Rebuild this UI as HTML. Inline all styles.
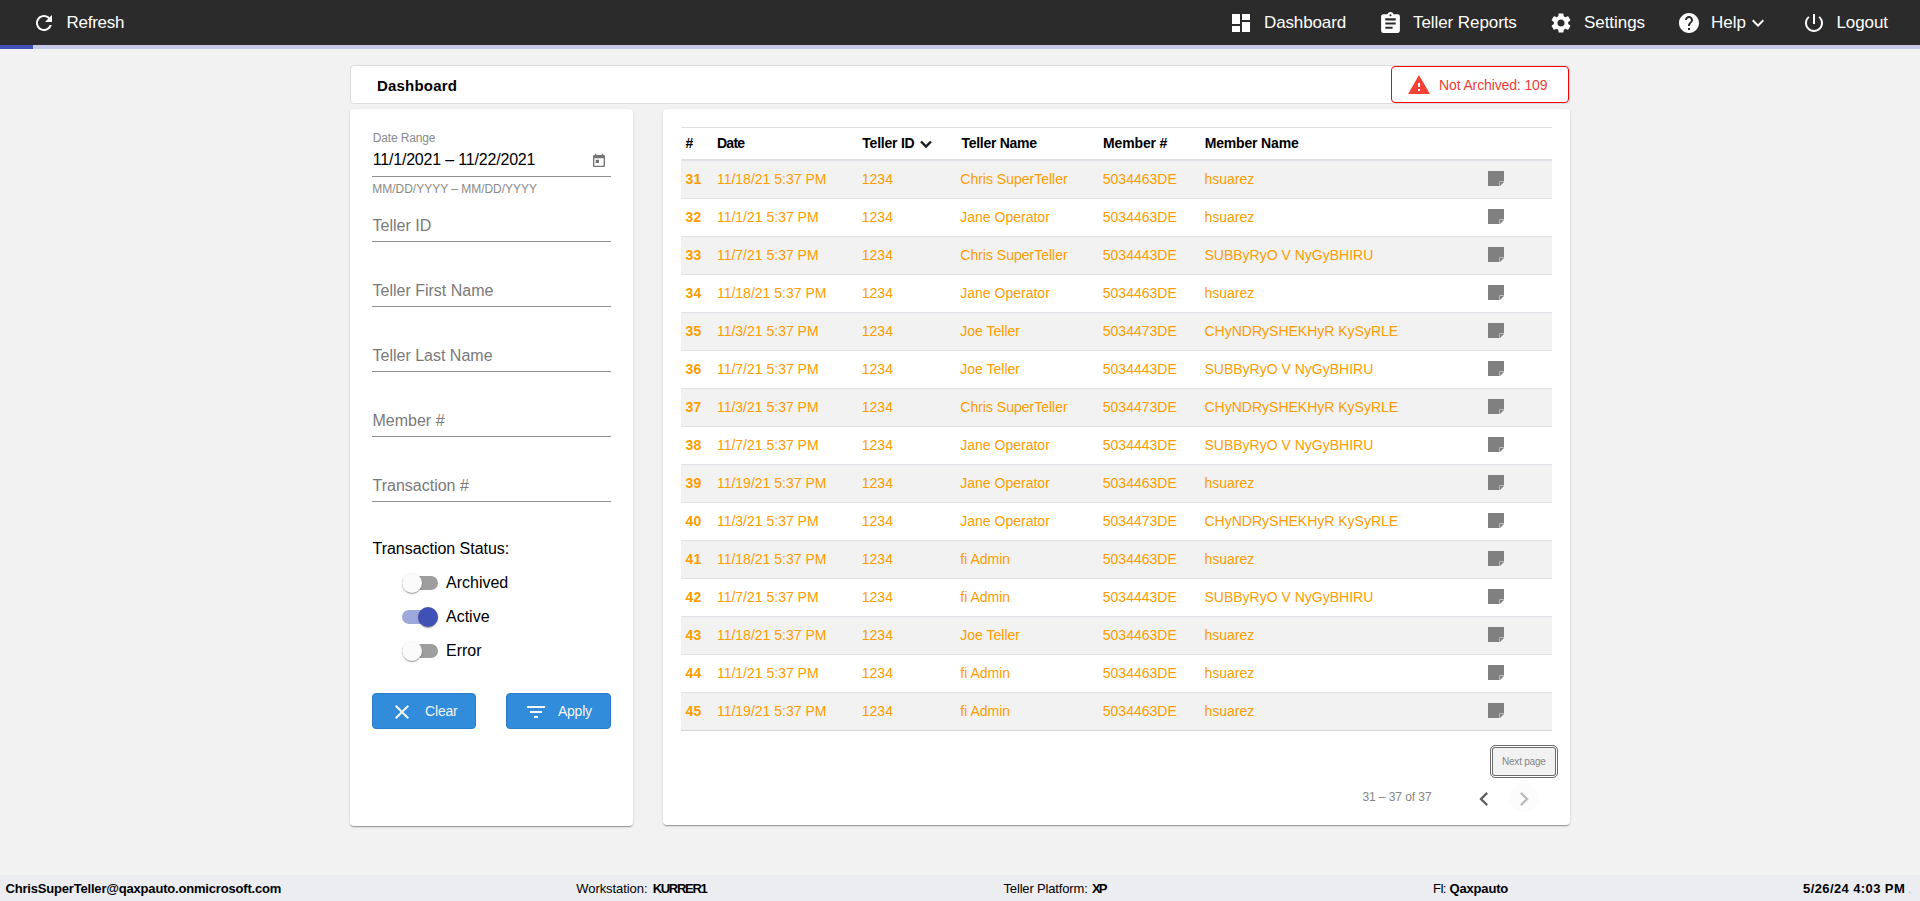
<!DOCTYPE html>
<html><head><meta charset="utf-8"><title>Dashboard</title>
<style>
html,body{margin:0;padding:0;}
body{width:1920px;height:901px;overflow:hidden;position:relative;background:#f2f2f2;font-family:"Liberation Sans",sans-serif;}
.t{position:absolute;white-space:nowrap;line-height:1;}
.ic{position:absolute;display:block;}
.abs{position:absolute;}
</style></head><body>
<div class="abs" style="left:0;top:0;width:1920px;height:45px;background:#2b2b2b"></div>
<div class="abs" style="left:0;top:45px;width:1920px;height:4px;background:#c5cae9"></div>
<div class="abs" style="left:0;top:45px;width:33px;height:4px;background:#3f51b5"></div>
<svg class="ic" style="left:31.5px;top:11px;width:24px;height:24px" viewBox="0 0 24 24" fill="#fff"><path d="M17.65 6.35C16.2 4.9 14.21 4 12 4c-4.42 0-7.99 3.58-7.99 8s3.57 8 7.99 8c3.73 0 6.84-2.55 7.73-6h-2.08c-.82 2.33-3.04 4-5.65 4-3.31 0-6-2.69-6-6s2.69-6 6-6c1.66 0 3.14.69 4.22 1.78L13 11h7V4l-2.35 2.35z"/></svg>
<div class="t" style="left:66.50px;top:14px;font-size:17px;color:#fff;font-weight:400;letter-spacing:-0.250px;">Refresh</div>
<svg class="ic" style="left:1229px;top:11px;width:24px;height:24px" viewBox="0 0 24 24" fill="#fff"><path d="M3 13h8V3H3v10zm0 8h8v-6H3v6zm10 0h8V11h-8v10zm0-18v6h8V3h-8z"/></svg>
<div class="t" style="left:1264.00px;top:14px;font-size:17px;color:#fff;font-weight:400;letter-spacing:-0.125px;">Dashboard</div>
<svg class="ic" style="left:1378.3px;top:11px;width:25px;height:25px" viewBox="0 0 24 24" fill="#fff"><path d="M19 3h-4.18C14.4 1.84 13.3 1 12 1c-1.3 0-2.4.84-2.82 2H5c-1.1 0-2 .9-2 2v14c0 1.1.9 2 2 2h14c1.1 0 2-.9 2-2V5c0-1.1-.9-2-2-2zm-7 0c.55 0 1 .45 1 1s-.45 1-1 1-1-.45-1-1 .45-1 1-1zm2 14H7v-2h7v2zm3-4H7v-2h10v2zm0-4H7V7h10v2z"/></svg>
<div class="t" style="left:1413.00px;top:14px;font-size:17px;color:#fff;font-weight:400;letter-spacing:-0.077px;">Teller Reports</div>
<svg class="ic" style="left:1549px;top:11px;width:24px;height:24px" viewBox="0 0 24 24" fill="#fff"><path d="M19.14 12.94c.04-.3.06-.61.06-.94 0-.32-.02-.64-.07-.94l2.03-1.58c.18-.14.23-.41.12-.61l-1.92-3.32c-.12-.22-.37-.29-.59-.22l-2.39.96c-.5-.38-1.03-.7-1.62-.94l-.36-2.54c-.04-.24-.24-.41-.48-.41h-3.84c-.24 0-.43.17-.47.41l-.36 2.54c-.59.24-1.13.57-1.62.94l-2.39-.96c-.22-.08-.47 0-.59.22L2.74 8.87c-.12.21-.08.47.12.61l2.03 1.58c-.05.3-.09.63-.09.94s.02.64.07.94l-2.03 1.58c-.18.14-.23.41-.12.61l1.92 3.32c.12.22.37.29.59.22l2.39-.96c.5.38 1.03.7 1.62.94l.36 2.54c.05.24.24.41.48.41h3.84c.24 0 .44-.17.47-.41l.36-2.54c.59-.24 1.13-.56 1.62-.94l2.39.96c.22.08.47 0 .59-.22l1.92-3.32c.12-.22.07-.47-.12-.61l-2.01-1.58zM12 15.6c-1.98 0-3.6-1.62-3.6-3.6s1.62-3.6 3.6-3.6 3.6 1.62 3.6 3.6-1.62 3.6-3.6 3.6z"/></svg>
<div class="t" style="left:1584.00px;top:14px;font-size:17px;color:#fff;font-weight:400;letter-spacing:-0.057px;">Settings</div>
<svg class="ic" style="left:1677px;top:11px;width:24px;height:24px" viewBox="0 0 24 24" fill="#fff"><path d="M12 2C6.48 2 2 6.48 2 12s4.48 10 10 10 10-4.48 10-10S17.52 2 12 2zm1 17h-2v-2h2v2zm2.07-7.75l-.9.92C13.45 12.9 13 13.5 13 15h-2v-.5c0-1.1.45-2.1 1.17-2.83l1.24-1.26c.37-.36.59-.86.59-1.41 0-1.1-.9-2-2-2s-2 .9-2 2H8c0-2.21 1.79-4 4-4s4 1.79 4 4c0 .88-.36 1.68-.93 2.25z"/></svg>
<div class="t" style="left:1711.00px;top:14px;font-size:17px;color:#fff;font-weight:400;">Help</div>
<svg class="ic" style="left:1745.8px;top:11px;width:24px;height:24px" viewBox="0 0 24 24" fill="#fff"><path d="M16.59 8.59L12 13.17 7.41 8.59 6 10l6 6 6-6z"/></svg>
<svg class="ic" style="left:1802px;top:11px;width:24px;height:24px" viewBox="0 0 24 24" fill="#fff"><path d="M13 3h-2v10h2V3zm4.83 2.17l-1.42 1.42C17.99 7.86 19 9.81 19 12c0 3.87-3.13 7-7 7s-7-3.13-7-7c0-2.19 1.01-4.14 2.58-5.42L6.17 5.17C4.23 6.82 3 9.26 3 12c0 4.97 4.03 9 9 9s9-4.03 9-9c0-2.74-1.23-5.18-3.17-6.83z"/></svg>
<div class="t" style="left:1836.40px;top:14px;font-size:17px;color:#fff;font-weight:400;letter-spacing:-0.080px;">Logout</div>
<div class="abs" style="left:350px;top:65px;width:1218px;height:37px;background:#fff;border:1px solid #dcdcdc;border-radius:4px"></div>
<div class="t" style="left:377.00px;top:78px;font-size:15px;color:#000;font-weight:700;letter-spacing:0.188px;">Dashboard</div>
<div class="abs" style="left:1391px;top:66px;width:176px;height:35px;background:#fff;border:1px solid #ff0000;border-radius:4px"></div>
<svg class="ic" style="left:1406.6px;top:73px;width:24px;height:24px" viewBox="0 0 24 24" fill="#f44336"><path d="M1 21h22L12 2 1 21zm12-3h-2v-2h2v2zm0-4h-2v-4h2v4z"/></svg>
<div class="t" style="left:1439.00px;top:78px;font-size:14px;color:#ee3d38;font-weight:400;letter-spacing:-0.125px;">Not Archived: 109</div>
<div class="abs" style="left:350px;top:109px;width:283px;height:717px;background:#fff;border-radius:4px;box-shadow:0 2px 1px -1px rgba(0,0,0,.2),0 1px 1px 0 rgba(0,0,0,.14),0 1px 3px 0 rgba(0,0,0,.12);"></div>
<div class="t" style="left:372.70px;top:132px;font-size:12px;color:#8a8a8a;font-weight:400;letter-spacing:-0.133px;">Date Range</div>
<div class="t" style="left:372.70px;top:152px;font-size:16px;color:#000;font-weight:400;letter-spacing:-0.186px;">11/1/2021 – 11/22/2021</div>
<svg class="ic" style="left:590.9px;top:152.8px;width:16px;height:16px" viewBox="0 0 24 24" fill="#757575"><path d="M19 3h-1V1h-2v2H8V1H6v2H5c-1.11 0-1.99.9-1.99 2L3 19c0 1.1.89 2 2 2h14c1.1 0 2-.9 2-2V5c0-1.1-.9-2-2-2zm0 16H5V8h14v11zM7 10h5v5H7z"/></svg>
<div class="abs" style="left:372px;top:176px;width:239px;height:1px;background:#8f8f8f"></div>
<div class="t" style="left:372.30px;top:183px;font-size:12px;color:#8a8a8a;font-weight:400;letter-spacing:-0.018px;">MM/DD/YYYY – MM/DD/YYYY</div>
<div class="t" style="left:372.50px;top:218px;font-size:16px;color:#7a7a7a;font-weight:400;">Teller ID</div>
<div class="abs" style="left:372px;top:241px;width:239px;height:1px;background:#8f8f8f"></div>
<div class="t" style="left:372.50px;top:283px;font-size:16px;color:#7a7a7a;font-weight:400;">Teller First Name</div>
<div class="abs" style="left:372px;top:306px;width:239px;height:1px;background:#8f8f8f"></div>
<div class="t" style="left:372.50px;top:348px;font-size:16px;color:#7a7a7a;font-weight:400;">Teller Last Name</div>
<div class="abs" style="left:372px;top:371px;width:239px;height:1px;background:#8f8f8f"></div>
<div class="t" style="left:372.50px;top:413px;font-size:16px;color:#7a7a7a;font-weight:400;">Member #</div>
<div class="abs" style="left:372px;top:436px;width:239px;height:1px;background:#8f8f8f"></div>
<div class="t" style="left:372.50px;top:478px;font-size:16px;color:#7a7a7a;font-weight:400;">Transaction #</div>
<div class="abs" style="left:372px;top:501px;width:239px;height:1px;background:#8f8f8f"></div>
<div class="t" style="left:372.50px;top:541px;font-size:16px;color:#000;font-weight:400;letter-spacing:-0.028px;">Transaction Status:</div>
<div class="abs" style="left:402px;top:575.5px;width:36px;height:14px;border-radius:7px;background:#9e9e9e"></div>
<div class="abs" style="left:402px;top:572.5px;width:20px;height:20px;border-radius:10px;background:#fafafa;box-shadow:0 2px 1px -1px rgba(0,0,0,.2),0 1px 1px 0 rgba(0,0,0,.14),0 1px 3px 0 rgba(0,0,0,.12)"></div>
<div class="t" style="left:446.00px;top:575px;font-size:16px;color:#000;font-weight:400;">Archived</div>
<div class="abs" style="left:402px;top:609.6px;width:36px;height:14px;border-radius:7px;background:#9fa8da"></div>
<div class="abs" style="left:418px;top:606.6px;width:20px;height:20px;border-radius:10px;background:#3f51b5;box-shadow:0 2px 1px -1px rgba(0,0,0,.2),0 1px 1px 0 rgba(0,0,0,.14),0 1px 3px 0 rgba(0,0,0,.12)"></div>
<div class="t" style="left:446.00px;top:609px;font-size:16px;color:#000;font-weight:400;">Active</div>
<div class="abs" style="left:402px;top:643.8px;width:36px;height:14px;border-radius:7px;background:#9e9e9e"></div>
<div class="abs" style="left:402px;top:640.8px;width:20px;height:20px;border-radius:10px;background:#fafafa;box-shadow:0 2px 1px -1px rgba(0,0,0,.2),0 1px 1px 0 rgba(0,0,0,.14),0 1px 3px 0 rgba(0,0,0,.12)"></div>
<div class="t" style="left:446.00px;top:643px;font-size:16px;color:#000;font-weight:400;">Error</div>
<div class="abs" style="left:372px;top:693px;width:102px;height:34px;background:#318cdc;border:1px solid #2a7cc6;border-radius:4px"></div>
<svg class="ic" style="left:390.3px;top:700px;width:24px;height:24px" viewBox="0 0 24 24" fill="#f5f5f5"><path d="M19 6.41L17.59 5 12 10.59 6.41 5 5 6.41 10.59 12 5 17.59 6.41 19 12 13.41 17.59 19 19 17.59 13.41 12z"/></svg>
<div class="t" style="left:425.10px;top:704px;font-size:14px;color:#f5f5f5;font-weight:400;letter-spacing:-0.200px;">Clear</div>
<div class="abs" style="left:506px;top:693px;width:103px;height:34px;background:#318cdc;border:1px solid #2a7cc6;border-radius:4px"></div>
<svg class="ic" style="left:523.7px;top:700px;width:24px;height:24px" viewBox="0 0 24 24" fill="#f5f5f5"><path d="M10 18h4v-2h-4v2zM3 6v2h18V6H3zm3 7h12v-2H6v2z"/></svg>
<div class="t" style="left:558.00px;top:704px;font-size:14px;color:#f5f5f5;font-weight:400;letter-spacing:-0.250px;">Apply</div>
<div class="abs" style="left:663px;top:109px;width:907px;height:716px;background:#fff;border-radius:4px;box-shadow:0 2px 1px -1px rgba(0,0,0,.2),0 1px 1px 0 rgba(0,0,0,.14),0 1px 3px 0 rgba(0,0,0,.12);"></div>
<div class="abs" style="left:681px;top:127px;width:871px;height:1px;background:#dee2e6"></div>
<div class="t" style="left:685.60px;top:136px;font-size:14px;color:#000;font-weight:700;">#</div>
<div class="t" style="left:716.90px;top:136px;font-size:14px;color:#000;font-weight:700;letter-spacing:-0.700px;">Date</div>
<div class="t" style="left:862.30px;top:136px;font-size:14px;color:#000;font-weight:700;letter-spacing:-0.225px;">Teller ID</div>
<div class="t" style="left:961.50px;top:136px;font-size:14px;color:#000;font-weight:700;letter-spacing:-0.280px;">Teller Name</div>
<div class="t" style="left:1103.00px;top:136px;font-size:14px;color:#000;font-weight:700;letter-spacing:-0.143px;">Member #</div>
<div class="t" style="left:1204.70px;top:136px;font-size:14px;color:#000;font-weight:700;letter-spacing:-0.170px;">Member Name</div>
<svg class="ic" style="left:919px;top:138.5px;width:14px;height:11px" viewBox="0 0 14 11"><path d="M2 2.5 L7 7.5 L12 2.5" fill="none" stroke="#1a1a1a" stroke-width="2.4"/></svg>
<div class="abs" style="left:681px;top:159px;width:871px;height:2px;background:#dee2e6"></div>
<div class="abs" style="left:681px;top:161px;width:871px;height:37px;background:#f2f2f2"></div>
<div class="abs" style="left:681px;top:198px;width:871px;height:1px;background:#dee2e6"></div>
<div class="t" style="left:685.60px;top:172px;font-size:14px;color:#ff9c00;font-weight:700;">31</div>
<div class="t" style="left:716.90px;top:172px;font-size:14px;color:#ff9c00;font-weight:400;">11/18/21 5:37 PM</div>
<div class="t" style="left:861.80px;top:172px;font-size:14px;color:#ff9c00;font-weight:400;">1234</div>
<div class="t" style="left:960.30px;top:172px;font-size:14px;color:#ff9c00;font-weight:400;">Chris SuperTeller</div>
<div class="t" style="left:1102.80px;top:172px;font-size:14px;color:#ff9c00;font-weight:400;">5034463DE</div>
<div class="t" style="left:1204.50px;top:172px;font-size:14px;color:#ff9c00;font-weight:400;">hsuarez</div>
<svg class="ic" style="left:1488px;top:171px;width:16px;height:15px" viewBox="0 0 16 15"><path d="M0 0H16V10.5H11.5V15H0Z" fill="#808080"/><path d="M12 11H16L12 15Z" fill="#808080"/></svg>
<div class="abs" style="left:681px;top:236px;width:871px;height:1px;background:#dee2e6"></div>
<div class="t" style="left:685.60px;top:210px;font-size:14px;color:#ff9c00;font-weight:700;">32</div>
<div class="t" style="left:716.90px;top:210px;font-size:14px;color:#ff9c00;font-weight:400;">11/1/21 5:37 PM</div>
<div class="t" style="left:861.80px;top:210px;font-size:14px;color:#ff9c00;font-weight:400;">1234</div>
<div class="t" style="left:960.30px;top:210px;font-size:14px;color:#ff9c00;font-weight:400;">Jane Operator</div>
<div class="t" style="left:1102.80px;top:210px;font-size:14px;color:#ff9c00;font-weight:400;">5034463DE</div>
<div class="t" style="left:1204.50px;top:210px;font-size:14px;color:#ff9c00;font-weight:400;">hsuarez</div>
<svg class="ic" style="left:1488px;top:209px;width:16px;height:15px" viewBox="0 0 16 15"><path d="M0 0H16V10.5H11.5V15H0Z" fill="#808080"/><path d="M12 11H16L12 15Z" fill="#808080"/></svg>
<div class="abs" style="left:681px;top:237px;width:871px;height:37px;background:#f2f2f2"></div>
<div class="abs" style="left:681px;top:274px;width:871px;height:1px;background:#dee2e6"></div>
<div class="t" style="left:685.60px;top:248px;font-size:14px;color:#ff9c00;font-weight:700;">33</div>
<div class="t" style="left:716.90px;top:248px;font-size:14px;color:#ff9c00;font-weight:400;">11/7/21 5:37 PM</div>
<div class="t" style="left:861.80px;top:248px;font-size:14px;color:#ff9c00;font-weight:400;">1234</div>
<div class="t" style="left:960.30px;top:248px;font-size:14px;color:#ff9c00;font-weight:400;">Chris SuperTeller</div>
<div class="t" style="left:1102.80px;top:248px;font-size:14px;color:#ff9c00;font-weight:400;">5034443DE</div>
<div class="t" style="left:1204.50px;top:248px;font-size:14px;color:#ff9c00;font-weight:400;">SUBByRyO V NyGyBHIRU</div>
<svg class="ic" style="left:1488px;top:247px;width:16px;height:15px" viewBox="0 0 16 15"><path d="M0 0H16V10.5H11.5V15H0Z" fill="#808080"/><path d="M12 11H16L12 15Z" fill="#808080"/></svg>
<div class="abs" style="left:681px;top:312px;width:871px;height:1px;background:#dee2e6"></div>
<div class="t" style="left:685.60px;top:286px;font-size:14px;color:#ff9c00;font-weight:700;">34</div>
<div class="t" style="left:716.90px;top:286px;font-size:14px;color:#ff9c00;font-weight:400;">11/18/21 5:37 PM</div>
<div class="t" style="left:861.80px;top:286px;font-size:14px;color:#ff9c00;font-weight:400;">1234</div>
<div class="t" style="left:960.30px;top:286px;font-size:14px;color:#ff9c00;font-weight:400;">Jane Operator</div>
<div class="t" style="left:1102.80px;top:286px;font-size:14px;color:#ff9c00;font-weight:400;">5034463DE</div>
<div class="t" style="left:1204.50px;top:286px;font-size:14px;color:#ff9c00;font-weight:400;">hsuarez</div>
<svg class="ic" style="left:1488px;top:285px;width:16px;height:15px" viewBox="0 0 16 15"><path d="M0 0H16V10.5H11.5V15H0Z" fill="#808080"/><path d="M12 11H16L12 15Z" fill="#808080"/></svg>
<div class="abs" style="left:681px;top:313px;width:871px;height:37px;background:#f2f2f2"></div>
<div class="abs" style="left:681px;top:350px;width:871px;height:1px;background:#dee2e6"></div>
<div class="t" style="left:685.60px;top:324px;font-size:14px;color:#ff9c00;font-weight:700;">35</div>
<div class="t" style="left:716.90px;top:324px;font-size:14px;color:#ff9c00;font-weight:400;">11/3/21 5:37 PM</div>
<div class="t" style="left:861.80px;top:324px;font-size:14px;color:#ff9c00;font-weight:400;">1234</div>
<div class="t" style="left:960.30px;top:324px;font-size:14px;color:#ff9c00;font-weight:400;">Joe Teller</div>
<div class="t" style="left:1102.80px;top:324px;font-size:14px;color:#ff9c00;font-weight:400;">5034473DE</div>
<div class="t" style="left:1204.50px;top:324px;font-size:14px;color:#ff9c00;font-weight:400;">CHyNDRySHEKHyR KySyRLE</div>
<svg class="ic" style="left:1488px;top:323px;width:16px;height:15px" viewBox="0 0 16 15"><path d="M0 0H16V10.5H11.5V15H0Z" fill="#808080"/><path d="M12 11H16L12 15Z" fill="#808080"/></svg>
<div class="abs" style="left:681px;top:388px;width:871px;height:1px;background:#dee2e6"></div>
<div class="t" style="left:685.60px;top:362px;font-size:14px;color:#ff9c00;font-weight:700;">36</div>
<div class="t" style="left:716.90px;top:362px;font-size:14px;color:#ff9c00;font-weight:400;">11/7/21 5:37 PM</div>
<div class="t" style="left:861.80px;top:362px;font-size:14px;color:#ff9c00;font-weight:400;">1234</div>
<div class="t" style="left:960.30px;top:362px;font-size:14px;color:#ff9c00;font-weight:400;">Joe Teller</div>
<div class="t" style="left:1102.80px;top:362px;font-size:14px;color:#ff9c00;font-weight:400;">5034443DE</div>
<div class="t" style="left:1204.50px;top:362px;font-size:14px;color:#ff9c00;font-weight:400;">SUBByRyO V NyGyBHIRU</div>
<svg class="ic" style="left:1488px;top:361px;width:16px;height:15px" viewBox="0 0 16 15"><path d="M0 0H16V10.5H11.5V15H0Z" fill="#808080"/><path d="M12 11H16L12 15Z" fill="#808080"/></svg>
<div class="abs" style="left:681px;top:389px;width:871px;height:37px;background:#f2f2f2"></div>
<div class="abs" style="left:681px;top:426px;width:871px;height:1px;background:#dee2e6"></div>
<div class="t" style="left:685.60px;top:400px;font-size:14px;color:#ff9c00;font-weight:700;">37</div>
<div class="t" style="left:716.90px;top:400px;font-size:14px;color:#ff9c00;font-weight:400;">11/3/21 5:37 PM</div>
<div class="t" style="left:861.80px;top:400px;font-size:14px;color:#ff9c00;font-weight:400;">1234</div>
<div class="t" style="left:960.30px;top:400px;font-size:14px;color:#ff9c00;font-weight:400;">Chris SuperTeller</div>
<div class="t" style="left:1102.80px;top:400px;font-size:14px;color:#ff9c00;font-weight:400;">5034473DE</div>
<div class="t" style="left:1204.50px;top:400px;font-size:14px;color:#ff9c00;font-weight:400;">CHyNDRySHEKHyR KySyRLE</div>
<svg class="ic" style="left:1488px;top:399px;width:16px;height:15px" viewBox="0 0 16 15"><path d="M0 0H16V10.5H11.5V15H0Z" fill="#808080"/><path d="M12 11H16L12 15Z" fill="#808080"/></svg>
<div class="abs" style="left:681px;top:464px;width:871px;height:1px;background:#dee2e6"></div>
<div class="t" style="left:685.60px;top:438px;font-size:14px;color:#ff9c00;font-weight:700;">38</div>
<div class="t" style="left:716.90px;top:438px;font-size:14px;color:#ff9c00;font-weight:400;">11/7/21 5:37 PM</div>
<div class="t" style="left:861.80px;top:438px;font-size:14px;color:#ff9c00;font-weight:400;">1234</div>
<div class="t" style="left:960.30px;top:438px;font-size:14px;color:#ff9c00;font-weight:400;">Jane Operator</div>
<div class="t" style="left:1102.80px;top:438px;font-size:14px;color:#ff9c00;font-weight:400;">5034443DE</div>
<div class="t" style="left:1204.50px;top:438px;font-size:14px;color:#ff9c00;font-weight:400;">SUBByRyO V NyGyBHIRU</div>
<svg class="ic" style="left:1488px;top:437px;width:16px;height:15px" viewBox="0 0 16 15"><path d="M0 0H16V10.5H11.5V15H0Z" fill="#808080"/><path d="M12 11H16L12 15Z" fill="#808080"/></svg>
<div class="abs" style="left:681px;top:465px;width:871px;height:37px;background:#f2f2f2"></div>
<div class="abs" style="left:681px;top:502px;width:871px;height:1px;background:#dee2e6"></div>
<div class="t" style="left:685.60px;top:476px;font-size:14px;color:#ff9c00;font-weight:700;">39</div>
<div class="t" style="left:716.90px;top:476px;font-size:14px;color:#ff9c00;font-weight:400;">11/19/21 5:37 PM</div>
<div class="t" style="left:861.80px;top:476px;font-size:14px;color:#ff9c00;font-weight:400;">1234</div>
<div class="t" style="left:960.30px;top:476px;font-size:14px;color:#ff9c00;font-weight:400;">Jane Operator</div>
<div class="t" style="left:1102.80px;top:476px;font-size:14px;color:#ff9c00;font-weight:400;">5034463DE</div>
<div class="t" style="left:1204.50px;top:476px;font-size:14px;color:#ff9c00;font-weight:400;">hsuarez</div>
<svg class="ic" style="left:1488px;top:475px;width:16px;height:15px" viewBox="0 0 16 15"><path d="M0 0H16V10.5H11.5V15H0Z" fill="#808080"/><path d="M12 11H16L12 15Z" fill="#808080"/></svg>
<div class="abs" style="left:681px;top:540px;width:871px;height:1px;background:#dee2e6"></div>
<div class="t" style="left:685.60px;top:514px;font-size:14px;color:#ff9c00;font-weight:700;">40</div>
<div class="t" style="left:716.90px;top:514px;font-size:14px;color:#ff9c00;font-weight:400;">11/3/21 5:37 PM</div>
<div class="t" style="left:861.80px;top:514px;font-size:14px;color:#ff9c00;font-weight:400;">1234</div>
<div class="t" style="left:960.30px;top:514px;font-size:14px;color:#ff9c00;font-weight:400;">Jane Operator</div>
<div class="t" style="left:1102.80px;top:514px;font-size:14px;color:#ff9c00;font-weight:400;">5034473DE</div>
<div class="t" style="left:1204.50px;top:514px;font-size:14px;color:#ff9c00;font-weight:400;">CHyNDRySHEKHyR KySyRLE</div>
<svg class="ic" style="left:1488px;top:513px;width:16px;height:15px" viewBox="0 0 16 15"><path d="M0 0H16V10.5H11.5V15H0Z" fill="#808080"/><path d="M12 11H16L12 15Z" fill="#808080"/></svg>
<div class="abs" style="left:681px;top:541px;width:871px;height:37px;background:#f2f2f2"></div>
<div class="abs" style="left:681px;top:578px;width:871px;height:1px;background:#dee2e6"></div>
<div class="t" style="left:685.60px;top:552px;font-size:14px;color:#ff9c00;font-weight:700;">41</div>
<div class="t" style="left:716.90px;top:552px;font-size:14px;color:#ff9c00;font-weight:400;">11/18/21 5:37 PM</div>
<div class="t" style="left:861.80px;top:552px;font-size:14px;color:#ff9c00;font-weight:400;">1234</div>
<div class="t" style="left:960.30px;top:552px;font-size:14px;color:#ff9c00;font-weight:400;">fi Admin</div>
<div class="t" style="left:1102.80px;top:552px;font-size:14px;color:#ff9c00;font-weight:400;">5034463DE</div>
<div class="t" style="left:1204.50px;top:552px;font-size:14px;color:#ff9c00;font-weight:400;">hsuarez</div>
<svg class="ic" style="left:1488px;top:551px;width:16px;height:15px" viewBox="0 0 16 15"><path d="M0 0H16V10.5H11.5V15H0Z" fill="#808080"/><path d="M12 11H16L12 15Z" fill="#808080"/></svg>
<div class="abs" style="left:681px;top:616px;width:871px;height:1px;background:#dee2e6"></div>
<div class="t" style="left:685.60px;top:590px;font-size:14px;color:#ff9c00;font-weight:700;">42</div>
<div class="t" style="left:716.90px;top:590px;font-size:14px;color:#ff9c00;font-weight:400;">11/7/21 5:37 PM</div>
<div class="t" style="left:861.80px;top:590px;font-size:14px;color:#ff9c00;font-weight:400;">1234</div>
<div class="t" style="left:960.30px;top:590px;font-size:14px;color:#ff9c00;font-weight:400;">fi Admin</div>
<div class="t" style="left:1102.80px;top:590px;font-size:14px;color:#ff9c00;font-weight:400;">5034443DE</div>
<div class="t" style="left:1204.50px;top:590px;font-size:14px;color:#ff9c00;font-weight:400;">SUBByRyO V NyGyBHIRU</div>
<svg class="ic" style="left:1488px;top:589px;width:16px;height:15px" viewBox="0 0 16 15"><path d="M0 0H16V10.5H11.5V15H0Z" fill="#808080"/><path d="M12 11H16L12 15Z" fill="#808080"/></svg>
<div class="abs" style="left:681px;top:617px;width:871px;height:37px;background:#f2f2f2"></div>
<div class="abs" style="left:681px;top:654px;width:871px;height:1px;background:#dee2e6"></div>
<div class="t" style="left:685.60px;top:628px;font-size:14px;color:#ff9c00;font-weight:700;">43</div>
<div class="t" style="left:716.90px;top:628px;font-size:14px;color:#ff9c00;font-weight:400;">11/18/21 5:37 PM</div>
<div class="t" style="left:861.80px;top:628px;font-size:14px;color:#ff9c00;font-weight:400;">1234</div>
<div class="t" style="left:960.30px;top:628px;font-size:14px;color:#ff9c00;font-weight:400;">Joe Teller</div>
<div class="t" style="left:1102.80px;top:628px;font-size:14px;color:#ff9c00;font-weight:400;">5034463DE</div>
<div class="t" style="left:1204.50px;top:628px;font-size:14px;color:#ff9c00;font-weight:400;">hsuarez</div>
<svg class="ic" style="left:1488px;top:627px;width:16px;height:15px" viewBox="0 0 16 15"><path d="M0 0H16V10.5H11.5V15H0Z" fill="#808080"/><path d="M12 11H16L12 15Z" fill="#808080"/></svg>
<div class="abs" style="left:681px;top:692px;width:871px;height:1px;background:#dee2e6"></div>
<div class="t" style="left:685.60px;top:666px;font-size:14px;color:#ff9c00;font-weight:700;">44</div>
<div class="t" style="left:716.90px;top:666px;font-size:14px;color:#ff9c00;font-weight:400;">11/1/21 5:37 PM</div>
<div class="t" style="left:861.80px;top:666px;font-size:14px;color:#ff9c00;font-weight:400;">1234</div>
<div class="t" style="left:960.30px;top:666px;font-size:14px;color:#ff9c00;font-weight:400;">fi Admin</div>
<div class="t" style="left:1102.80px;top:666px;font-size:14px;color:#ff9c00;font-weight:400;">5034463DE</div>
<div class="t" style="left:1204.50px;top:666px;font-size:14px;color:#ff9c00;font-weight:400;">hsuarez</div>
<svg class="ic" style="left:1488px;top:665px;width:16px;height:15px" viewBox="0 0 16 15"><path d="M0 0H16V10.5H11.5V15H0Z" fill="#808080"/><path d="M12 11H16L12 15Z" fill="#808080"/></svg>
<div class="abs" style="left:681px;top:693px;width:871px;height:37px;background:#f2f2f2"></div>
<div class="abs" style="left:681px;top:730px;width:871px;height:1px;background:#d2d2d2"></div>
<div class="t" style="left:685.60px;top:704px;font-size:14px;color:#ff9c00;font-weight:700;">45</div>
<div class="t" style="left:716.90px;top:704px;font-size:14px;color:#ff9c00;font-weight:400;">11/19/21 5:37 PM</div>
<div class="t" style="left:861.80px;top:704px;font-size:14px;color:#ff9c00;font-weight:400;">1234</div>
<div class="t" style="left:960.30px;top:704px;font-size:14px;color:#ff9c00;font-weight:400;">fi Admin</div>
<div class="t" style="left:1102.80px;top:704px;font-size:14px;color:#ff9c00;font-weight:400;">5034463DE</div>
<div class="t" style="left:1204.50px;top:704px;font-size:14px;color:#ff9c00;font-weight:400;">hsuarez</div>
<svg class="ic" style="left:1488px;top:703px;width:16px;height:15px" viewBox="0 0 16 15"><path d="M0 0H16V10.5H11.5V15H0Z" fill="#808080"/><path d="M12 11H16L12 15Z" fill="#808080"/></svg>
<div class="abs" style="left:1490px;top:745px;width:66px;height:31px;background:#f2f2f2;border:1px solid #6b6b6b;border-radius:5px;box-shadow:inset 0 0 0 1px #fff, inset 0 0 0 2px #6b6b6b"></div>
<div class="t" style="left:1502.00px;top:757px;font-size:10px;color:#858585;font-weight:400;letter-spacing:-0.213px;">Next page</div>
<div class="t" style="left:1362.40px;top:791px;font-size:12px;color:#858585;font-weight:400;letter-spacing:-0.075px;">31 – 37 of 37</div>
<div class="abs" style="left:1509px;top:782px;width:30px;height:30px;border-radius:15px;background:#fcfcfc"></div>
<svg class="ic" style="left:1470px;top:785px;width:28px;height:28px" viewBox="0 0 24 24" fill="#616161"><path d="M15.41 7.41L14 6l-6 6 6 6 1.41-1.41L10.83 12z"/></svg>
<svg class="ic" style="left:1510px;top:785px;width:28px;height:28px" viewBox="0 0 24 24" fill="#bdbdbd"><path d="M10 6L8.59 7.41 13.17 12l-4.58 4.59L10 18l6-6z"/></svg>
<div class="abs" style="left:0;top:875px;width:1920px;height:26px;background:#ebedf0"></div>
<div class="t" style="left:5.50px;top:882px;font-size:13px;color:#000;font-weight:700;letter-spacing:-0.188px;">ChrisSuperTeller@qaxpauto.onmicrosoft.com</div>
<div class="t" style="left:576.30px;top:882px;font-size:13px;color:#000;font-weight:400;letter-spacing:-0.073px;">Workstation:</div>
<div class="t" style="left:652.70px;top:882px;font-size:13px;color:#000;font-weight:700;letter-spacing:-1.300px;">KURRER1</div>
<div class="t" style="left:1003.50px;top:882px;font-size:13px;color:#000;font-weight:400;letter-spacing:-0.160px;">Teller Platform:</div>
<div class="t" style="left:1092.10px;top:882px;font-size:13px;color:#000;font-weight:700;letter-spacing:-1.900px;">XP</div>
<div class="t" style="left:1433.10px;top:882px;font-size:13px;color:#000;font-weight:400;letter-spacing:-0.9px;">FI:</div>
<div class="t" style="left:1449.50px;top:882px;font-size:13px;color:#000;font-weight:700;letter-spacing:-0.171px;">Qaxpauto</div>
<div class="t" style="left:1803.00px;top:882px;font-size:13px;color:#000;font-weight:700;letter-spacing:0.400px;">5/26/24 4:03 PM</div>
<div class="t" style="left:1908.00px;top:882px;font-size:13px;color:#bbb;font-weight:400;">.</div>
</body></html>
